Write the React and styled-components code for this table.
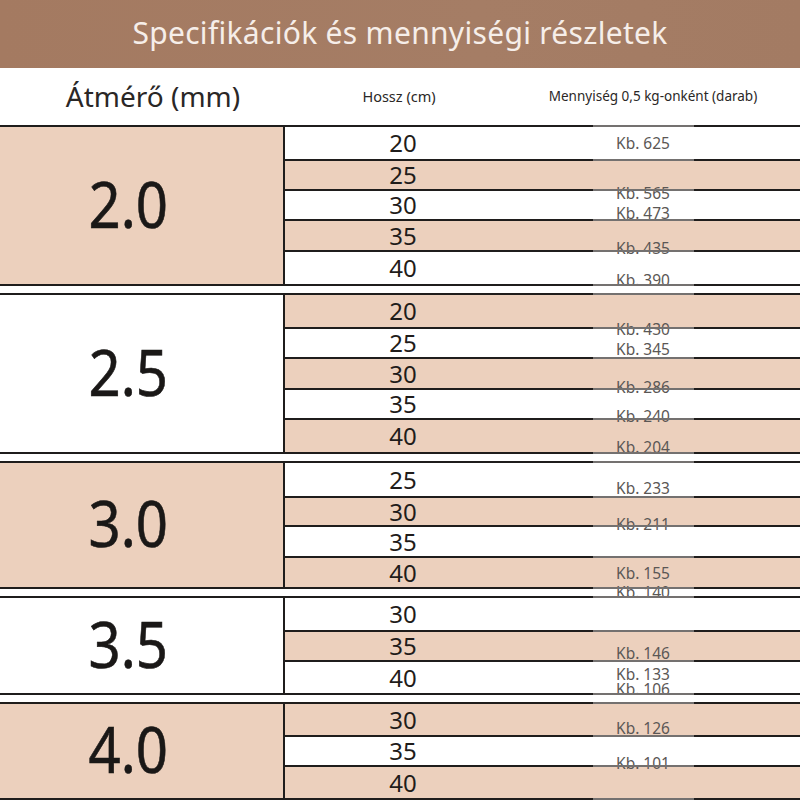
import React from 'react'
import styled, { createGlobalStyle } from 'styled-components'

const GlobalStyle = createGlobalStyle`
  html, body {
    margin: 0;
    padding: 0;
    background: #fff;
  }
  body {
    font-family: "Noto Sans", "Open Sans", sans-serif;
    color: #1c1a19;
  }
`

const PINK = '#ecd0bd'
const LINE = '#1f1d1c'

// diameter groups, row heights measured between lines
const groups = [
  { d: '2.0', pink: true, rows: [[20, 34], [25, 30], [30, 30], [35, 31], [40, 34]] },
  { d: '2.5', pink: false, rows: [[20, 34], [25, 30], [30, 31], [35, 30], [40, 34]] },
  { d: '3.0', pink: true, rows: [[25, 35], [30, 29], [35, 31], [40, 31]] },
  { d: '3.5', pink: false, rows: [[30, 34], [35, 30], [40, 33]] },
  { d: '4.0', pink: true, rows: [[30, 33], [35, 30], [40, 33]] },
]

// the quantity labels sit where they sit in the picture, not in their rows
const labels = [
  ['625', 143], ['565', 193], ['473', 213], ['435', 248], ['390', 280],
  ['430', 329], ['345', 349], ['286', 387], ['240', 416], ['204', 447],
  ['233', 488], ['211', 524], ['155', 573], ['140', 592],
  ['146', 653], ['133', 674], ['106', 689], ['126', 728], ['101', 763],
]

const Page = styled.div`
  width: 800px;
  height: 800px;
  overflow: hidden;
  position: relative;
  background: #fff;
`
const TitleBar = styled.div`
  height: 68px;
  background: linear-gradient(90deg, #a47a61 0%, #a57d65 60%, #a37b63 100%);
  display: flex;
  align-items: center;
  justify-content: center;
  color: #f6eee9;
  font-size: 30px;
  letter-spacing: 0.3px;
  padding-bottom: 4px;
  box-sizing: border-box;
`
const HeadRow = styled.div`
  height: 57px;
  display: grid;
  grid-template-columns: 306px 186px 1fr;
  align-items: center;
  text-align: center;
  padding-bottom: 2px;
  box-sizing: border-box;
`
const HeadCell = styled.div`
  font-size: ${p => p.size}px;
  color: #2a2726;
  padding-left: ${p => p.shift || 0}px;
`
const Body = styled.div`
  display: flex;
  flex-direction: column;
  gap: 7px;
`
const Group = styled.div`
  display: flex;
`
const Diameter = styled.div`
  box-sizing: border-box;
  width: 285px;
  flex: none;
  border-top: 2px solid ${LINE};
  border-bottom: 2px solid ${LINE};
  border-right: 2px solid ${LINE};
  background: ${p => p.pink ? PINK : '#fff'};
  display: flex;
  align-items: center;
  justify-content: center;
  padding-right: 26px;
  color: #1a1817;
`
const BigNumber = styled.span`
  display: inline-block;
  font-size: 64px;
  line-height: 1;
  transform: scaleX(0.88);
  padding-bottom: 4px;
  -webkit-text-stroke: 0.6px #1a1817;
`
const Rows = styled.div`
  flex: 1;
  display: flex;
  flex-direction: column;
`
const Row = styled.div`
  box-sizing: border-box;
  display: grid;
  grid-template-columns: 236px 72px 101px 1fr;
  background: ${p => p.pink ? PINK : '#fff'};
`
const Cell = styled.div`
  border-top: 2px solid ${p => p.patch ? '#747170' : LINE};
  border-bottom: ${p => p.last ? `2px solid ${p.patch ? '#747170' : LINE}` : 'none'};
  position: ${p => p.patch ? 'relative' : 'static'};
  z-index: ${p => p.patch ? 2 : 'auto'};
`
const Length = styled(Cell)`
  display: flex;
  align-items: center;
  justify-content: center;
  font-size: 24px;
  color: #1f1c1a;
  line-height: 1;
`
const Overlay = styled.div`
  position: absolute;
  left: 593px;
  top: 0;
  width: 101px;
  height: 800px;
  z-index: 1;
  pointer-events: none;
`
const Label = styled.div`
  position: absolute;
  left: 0;
  width: 100px;
  text-align: center;
  font-size: 15.5px;
  line-height: 18px;
  color: #5b5755;
`

export default function App() {
  let n = 0
  return (
    <Page>
      <GlobalStyle />
      <TitleBar>Specifikációk és mennyiségi részletek</TitleBar>
      <HeadRow>
        <HeadCell size={28}>Átmérő (mm)</HeadCell>
        <HeadCell size={14.5}>Hossz (cm)</HeadCell>
        <HeadCell size={13.5} shift={14}>Mennyiség 0,5 kg-onként (darab)</HeadCell>
      </HeadRow>
      <Body>
        {groups.map(g => (
          <Group key={g.d}>
            <Diameter pink={g.pink}><BigNumber>{g.d}</BigNumber></Diameter>
            <Rows>
              {g.rows.map(([len, h], i) => {
                const pink = n++ % 2 === 1
                const last = i === g.rows.length - 1
                return (
                  <Row key={len} pink={pink} style={{ height: h + (last ? 2 : 0) }}>
                    <Length last={last}>{len}</Length>
                    <Cell last={last} />
                    <Cell patch last={last} />
                    <Cell last={last} />
                  </Row>
                )
              })}
            </Rows>
          </Group>
        ))}
      </Body>
      <Overlay>
        {labels.map(([v, y]) => (
          <Label key={v} style={{ top: y - 9 }}>Kb. {v}</Label>
        ))}
      </Overlay>
    </Page>
  )
}
